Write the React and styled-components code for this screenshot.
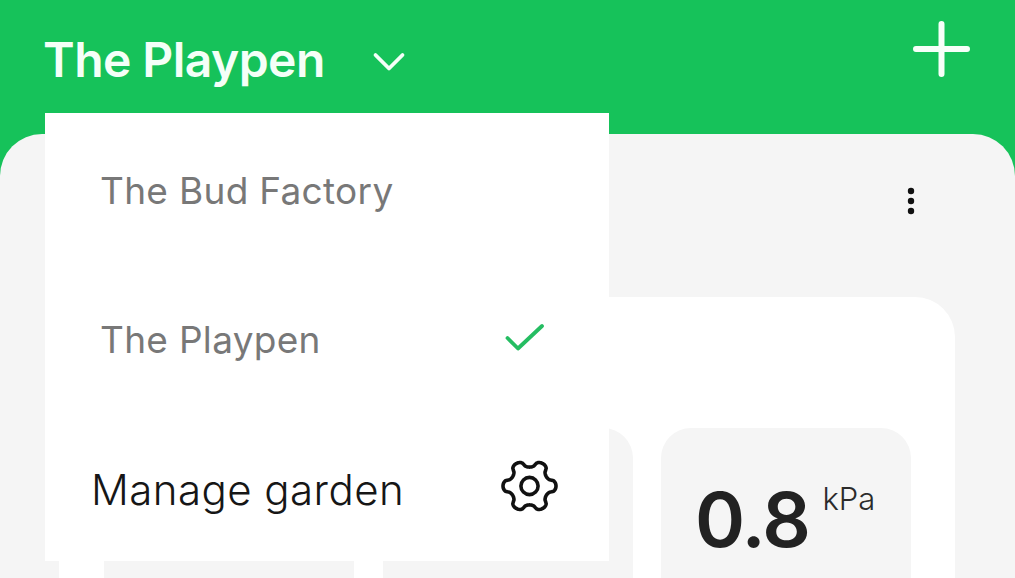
import React from 'react';
import styled, { createGlobalStyle } from 'styled-components';

const GlobalStyle = createGlobalStyle`
  html, body {
    margin: 0;
    padding: 0;
    background: #16c25a;
  }
  body {
    font-family: Inter, "Liberation Sans", sans-serif;
  }
`;

const Screen = styled.div`
  position: relative;
  width: 1015px;
  height: 578px;
  overflow: hidden;
  background: #16c25a;
`;

const Header = styled.header`
  display: flex;
  align-items: flex-start;
  justify-content: space-between;
  box-sizing: border-box;
  height: 134px;
  padding: 21px 45px 0 43px;
`;

const GardenPicker = styled.div`
  display: flex;
  align-items: center;
  height: 78px;
`;

const GardenTitle = styled.h1`
  margin: 0;
  color: #f4fff8;
  font-size: 48px;
  font-weight: 600;
  letter-spacing: -0.55px;
  line-height: 80px;
`;

const PickerChevron = styled.svg`
  display: block;
  width: 34px;
  height: 22px;
  margin: 3px 0 0 47px;
`;

const AddIcon = styled.svg`
  display: block;
  width: 57px;
  height: 56px;
`;

const Sheet = styled.main`
  box-sizing: border-box;
  height: 444px;
  padding: 0 60px 0 59px;
  background: #f5f5f5;
  border-radius: 42px 42px 0 0;
`;

const SheetBar = styled.div`
  display: flex;
  justify-content: flex-end;
  height: 163px;
  padding: 52px 37px 0 0;
  box-sizing: border-box;
`;

const MoreIcon = styled.svg`
  display: block;
  width: 14px;
  height: 30px;
`;

const Card = styled.section`
  box-sizing: border-box;
  height: 300px;
  padding: 131px 44px 0 45px;
  background: #fff;
  border-radius: 40px 40px 0 0;
`;

const TileRow = styled.div`
  display: grid;
  grid-template-columns: repeat(3, 250px);
  gap: 28px;
  justify-content: space-between;
`;

const Tile = styled.div`
  display: flex;
  align-items: flex-start;
  box-sizing: border-box;
  height: 200px;
  padding: 48px 0 0 34px;
  background: #f5f5f5;
  border-radius: 30px 30px 0 0;
`;

const Reading = styled.span`
  color: #222;
  font-size: 76px;
  font-weight: 600;
  letter-spacing: -1.5px;
  line-height: 86px;
`;

const Unit = styled.span`
  margin: 5px 0 0 13px;
  color: #2b2b2b;
  font-size: 31px;
  font-weight: 300;
  line-height: 36px;
`;

const Dropdown = styled.ul`
  position: absolute;
  top: 113px;
  left: 45px;
  display: flex;
  flex-direction: column;
  width: 564px;
  height: 448px;
  margin: 0;
  padding: 2px 50px 0 46px;
  box-sizing: border-box;
  list-style: none;
  background: #fff;
`;

const DropdownItem = styled.li`
  display: flex;
  flex: 1;
  align-items: center;
  justify-content: space-between;
  padding-left: ${props => (props.$action ? '0' : '9px')};
`;

const ItemLabel = styled.span`
  margin-top: ${props => (props.$action ? '5px' : '2px')};
  color: ${props => (props.$action ? '#161616' : '#787878')};
  font-size: ${props => (props.$action ? '42px' : '37px')};
  font-weight: ${props => (props.$action ? 300 : 400)};
  letter-spacing: ${props => (props.$action ? '0.45px' : '0.3px')};
`;

const CheckIcon = styled.svg`
  display: block;
  width: 40px;
  height: 30px;
  margin-right: 14px;
`;

const GearIcon = styled.svg`
  display: block;
  width: 60px;
  height: 58px;
  margin-top: -2px;
`;

// wavy six lobed outline, lobes sit at 0, 60, 120... degrees
const gearPath = (() => {
  const points = [];
  for (let i = 0; i < 144; i++) {
    const a = (i / 144) * Math.PI * 2;
    const wave = Math.cos(6 * a);
    const shaped = Math.sign(wave) * Math.pow(Math.abs(wave), 0.5);
    const r = 22.9 + 3.6 * shaped;
    points.push(`${(30.5 + r * Math.cos(a)).toFixed(2)} ${(29 + r * 0.98 * Math.sin(a)).toFixed(2)}`);
  }
  return `M${points.join('L')}Z`;
})();

const App = () => (
  <Screen>
    <GlobalStyle />
    <Header>
      <GardenPicker>
        <GardenTitle>The Playpen</GardenTitle>
        <PickerChevron viewBox="0 0 34 22">
          <path d="M3.5 4 L17 17.5 L30.5 4" fill="none" stroke="#f4fff8" strokeWidth="3.8" strokeLinecap="round" strokeLinejoin="round" />
        </PickerChevron>
      </GardenPicker>
      <AddIcon viewBox="0 0 57 56">
        <path d="M28.5 3 V53 M3 28 H54" fill="none" stroke="#f6fff9" strokeWidth="6" strokeLinecap="round" />
      </AddIcon>
    </Header>
    <Sheet>
      <SheetBar>
        <MoreIcon viewBox="0 0 14 30">
          <circle cx="7" cy="5" r="3.2" fill="#111" />
          <circle cx="7" cy="15" r="3.2" fill="#111" />
          <circle cx="7" cy="25" r="3.2" fill="#111" />
        </MoreIcon>
      </SheetBar>
      <Card>
        <TileRow>
          <Tile />
          <Tile />
          <Tile>
            <Reading>0.8</Reading>
            <Unit>kPa</Unit>
          </Tile>
        </TileRow>
      </Card>
    </Sheet>
    <Dropdown>
      <DropdownItem>
        <ItemLabel>The Bud Factory</ItemLabel>
      </DropdownItem>
      <DropdownItem>
        <ItemLabel>The Playpen</ItemLabel>
        <CheckIcon viewBox="0 0 40 30">
          <path d="M2.5 15 L13 25.5 L37 3" fill="none" stroke="#25bd62" strokeWidth="3.8" strokeLinecap="round" strokeLinejoin="round" />
        </CheckIcon>
      </DropdownItem>
      <DropdownItem $action>
        <ItemLabel $action>Manage garden</ItemLabel>
        <GearIcon viewBox="0 0 60 58">
          <path d={gearPath} fill="none" stroke="#111" strokeWidth="3.6" strokeLinejoin="round" />
          <circle cx="30.5" cy="29" r="8.6" fill="none" stroke="#111" strokeWidth="3.6" />
        </GearIcon>
      </DropdownItem>
    </Dropdown>
  </Screen>
);

export default App;
